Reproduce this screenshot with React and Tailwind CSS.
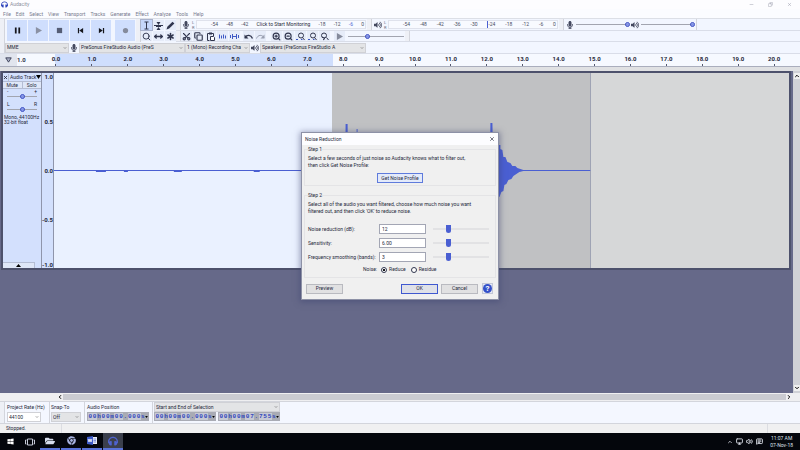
import { useState } from 'react';
import clsx from 'clsx';
import {
  ChevronDown,
  ChevronUp,
  ChevronLeft,
  ChevronRight,
  X,
  Minus,
  Copy,
  Scissors,
  ClipboardList,
  Undo2,
  Redo2,
  ZoomIn,
  ZoomOut,
  Search,
  MoveHorizontal,
  Asterisk,
  Monitor,
  Volume2,
  MessageSquareText,
} from 'lucide-react';
import { FaMicrophone, FaVolumeUp, FaWindows, FaChrome, FaFolderOpen, FaHeadphones } from 'react-icons/fa';

const MENUS = ['File', 'Edit', 'Select', 'View', 'Transport', 'Tracks', 'Generate', 'Effect', 'Analyze', 'Tools', 'Help'];

const DB_MARKS = ['-54', '-48', '-42', '-36', '-30', '-24', '-18', '-12', '-6', '0'];

const ROUND_THUMB =
  '[&::-webkit-slider-thumb]:appearance-none [&::-webkit-slider-thumb]:w-[3px] [&::-webkit-slider-thumb]:h-[3px] [&::-webkit-slider-thumb]:rounded-full [&::-webkit-slider-thumb]:bg-[#7f92e8] [&::-webkit-slider-thumb]:outline [&::-webkit-slider-thumb]:outline-[#3446c0]';

const BLOCK_THUMB =
  '[&::-webkit-slider-thumb]:appearance-none [&::-webkit-slider-thumb]:w-[5px] [&::-webkit-slider-thumb]:h-2 [&::-webkit-slider-thumb]:rounded-b-sm [&::-webkit-slider-thumb]:bg-[#4a5fd2]';

function Slider({ label, value, block = false, className }) {
  return (
    <input
      type="range"
      aria-label={label}
      defaultValue={value}
      className={clsx(
        'appearance-none min-w-0 bg-no-repeat bg-center',
        block
          ? 'bg-[linear-gradient(#e2e2e4,#e2e2e4)] bg-[length:100%_2px]'
          : 'bg-[linear-gradient(#a2a5b0,#a2a5b0)] bg-[length:100%_1px]',
        block ? BLOCK_THUMB : ROUND_THUMB,
        className
      )}
    />
  );
}

function Dropdown({ label, options, className, white = false }) {
  return (
    <div className={clsx('relative', className)}>
      <select
        aria-label={label}
        className={clsx(
          'block appearance-none w-full h-[10px] pl-px pr-2 border border-[#d0d1d6] text-[#26283a]',
          white ? 'bg-white' : 'bg-[#e3e4e6]'
        )}
      >
        {options.map((o) => (
          <option key={o}>{o}</option>
        ))}
      </select>
      <ChevronDown className="absolute right-[2px] top-[3px] w-1 h-1 text-[#555] pointer-events-none" strokeWidth={3} />
    </div>
  );
}

function Grip() {
  return <div className="w-[5px] self-stretch border-r border-[#d3d5dc] bg-[#eef0f6] flex-none" />;
}

// Transport glyphs
const TRANSPORT = [
  { name: 'Pause', color: '#15161c', d: 'M1 .5h2v7H1zM5 .5h2v7H5z' },
  { name: 'Play', color: '#8b91a3', d: 'M1 0l7 4-7 4z' },
  { name: 'Stop', color: '#555d75', d: 'M1 1h6v6H1z' },
  { name: 'Skip to Start', color: '#15161c', d: 'M1 1h1.4v6H1zM7 1v6L2.6 4z' },
  { name: 'Skip to End', color: '#15161c', d: 'M5.600 1H7v6H5.600zM1 1v6l4.400-3z' },
  { name: 'Record', color: '#858b9c', d: 'M4 1a3 3 0 1 1 0 6a3 3 0 1 1 0-6z' },
];

function TransportBar() {
  return (
    <div className="flex items-stretch py-px">
      {TRANSPORT.map((b, i) => (
        <button
          key={b.name}
          aria-label={b.name}
          className={clsx('w-5 mr-px bg-[#cfdefd] flex items-center justify-center', i === 5 && 'ml-[3px]')}
        >
          <svg viewBox="0 0 8 8" className="w-[7px] h-[7px]" fill={b.color}>
            <path d={b.d} />
          </svg>
        </button>
      ))}
    </div>
  );
}

function ToolsBar() {
  const icon = 'w-[9px] h-[9px]';
  const tools = [
    [
      'Selection Tool',
      <svg viewBox="0 0 9 9" className={icon} fill="none" stroke="currentColor">
        <path d="M2.500 1h4M2.500 8h4M4.500 1v7" />
      </svg>,
    ],
    [
      'Envelope Tool',
      <svg viewBox="0 0 9 9" className={icon} fill="none" stroke="currentColor">
        <path d="M0 4.500h9M2 5.500h5" />
        <path fill="currentColor" stroke="none" d="M2.500 1h4L4.500 4zM2.500 9h4l-2-3z" />
      </svg>,
    ],
    [
      'Draw Tool',
      <svg viewBox="0 0 9 9" className={icon} fill="currentColor">
        <path d="M.5 8.500l.8-2.700L6.500 .8l1.900 1.800-5.200 5z" />
      </svg>,
    ],
    ['Zoom Tool', <Search className={icon} strokeWidth={2.5} />],
    ['Time Shift Tool', <MoveHorizontal className={icon} strokeWidth={3.5} />],
    ['Multi-Tool', <Asterisk className={icon} strokeWidth={3} viewBox="3 3 18 18" />],
  ];
  return (
    <div className="grid grid-cols-3 gap-px py-px">
      {tools.map(([name, glyph], i) => (
        <button
          key={name}
          aria-label={name}
          className={clsx(
            'w-[11px] h-[10px] flex items-center justify-center text-[#31364e]',
            i === 0 ? 'bg-[#c5d6fb] outline outline-[#a9b2cc]' : 'bg-[#e6ecf9]'
          )}
        >
          {glyph}
        </button>
      ))}
    </div>
  );
}

function Channels() {
  return (
    <div className="text-[4px] leading-[5px] w-1 text-[#666a7c]">
      L<br />R
    </div>
  );
}

function Meter({ monitor = false, className }) {
  return (
    <div
      className={clsx(
        'flex justify-between items-center h-[9px] pl-[14px] pr-px bg-[#f8faff] border border-[#dfe2ec] text-[#4a4e62]',
        className
      )}
    >
      {monitor ? (
        <>
          {DB_MARKS.slice(0, 3).map((m) => (
            <span key={m}>{m}</span>
          ))}
          <button className="text-[#26283a] whitespace-nowrap">Click to Start Monitoring</button>
          {DB_MARKS.slice(6).map((m) => (
            <span key={m} className={clsx(m === '-6' && 'text-[#4a5fd2]')}>
              {m}
            </span>
          ))}
        </>
      ) : (
        DB_MARKS.map((m) => (
          <span key={m} className={clsx(m === '-24' && 'border-l border-[#4a5fd2]')}>
            {m}
          </span>
        ))
      )}
    </div>
  );
}

function EditBar() {
  const icon = 'w-[9px] h-[9px]';
  const btn = 'w-[11px] h-[10px] flex items-center justify-center bg-[#e6ecf9] text-[#31364e]';
  return (
    <div className="flex items-center gap-px">
      <button aria-label="Cut" className={btn}><Scissors className={clsx(icon, '-rotate-90')} strokeWidth={3} /></button>
      <button aria-label="Copy" className={btn}><Copy className={icon} strokeWidth={3} /></button>
      <button aria-label="Paste" className={btn}>
        <svg viewBox="0 0 9 9" className={icon} fill="none" stroke="currentColor">
          <path d="M3.500 8.500h-2v-7h6V4" />
          <path d="M3 1.500h3" strokeWidth="2" />
          <path d="M4.500 4.500h3l1 1v3h-4z" fill="#fff" />
        </svg>
      </button>
      <button aria-label="Trim" className={btn}>
        <svg viewBox="0 0 9 9" className={icon} fill="none" stroke="#3f58c4">
          <path d="M1.500 2.500v4M3.500 3.500v3M5.500 2.500v4M7.500 3.500v3" />
        </svg>
      </button>
      <button aria-label="Silence" className={btn}>
        <svg viewBox="0 0 9 9" className={icon} fill="none" stroke="#3f58c4">
          <path d="M.5 3v3M2.500 2v5M6.500 2v5M8.500 3v3M3 4.500h3" />
        </svg>
      </button>
      <button aria-label="Undo" className={clsx(btn, 'ml-[2px]')}>
        <svg viewBox="0 0 9 9" className={icon} fill="none" stroke="currentColor">
          <path d="M1 5.500C3 2.500 7 2.500 8.500 6.500" strokeWidth="1.300" />
          <path d="M.5 2.500v4h4z" fill="currentColor" stroke="none" />
        </svg>
      </button>
      <button aria-label="Redo" className={btn}>
        <svg viewBox="0 0 9 9" className={icon} fill="none" stroke="#9aa0b2">
          <path d="M8 5.500C6 2.500 2 2.500 .5 6.500" />
          <path d="M8.500 2.500v4h-4z" fill="#9aa0b2" stroke="none" />
        </svg>
      </button>
      <button aria-label="Zoom In" className={clsx(btn, 'ml-1')}><ZoomIn className={icon} strokeWidth={3} /></button>
      <button aria-label="Zoom Out" className={btn}><ZoomOut className={icon} strokeWidth={3} /></button>
      {['Fit Selection', 'Fit Project', 'Zoom Toggle'].map((n, i) => (
        <button key={n} aria-label={n} className={btn}>
          <svg viewBox="0 0 9 9" className={icon} fill="none" stroke="currentColor">
            <circle cx={i === 2 ? 4 : 5} cy="3.500" r="2.500" />
            <path d="M6.500 5.500L8.500 8" />
            {i === 2 ? <path d="M2 5l3 1.500L3 8" /> : <path d="M0 7.500h2M5 7.500h1.500" stroke="#3f58c4" />}
          </svg>
        </button>
      ))}
      <button aria-label="Play at Speed" className={clsx(btn, 'ml-[3px]')}>
        <svg viewBox="0 0 8 8" className="w-[7px] h-[7px]" fill="#858b9c">
          <path d="M1 0l7 4-7 4z" />
        </svg>
      </button>
      <Slider label="Playback speed" value={34} className="w-14 h-2 ml-[2px]" />
      <Grip />
    </div>
  );
}

function Toolbars() {
  return (
    <div className="bg-[#f2f6ff] border-t border-[#dcdfe6]">
      <div className="flex h-[23px]">
        <Grip />
        <div className="w-[2px]" />
        <TransportBar />
        <Grip />
        <ToolsBar />
        <div className="flex-1 min-w-0 flex flex-col">
          <div className="h-3 flex items-center border-b border-[#d9dde8]">
            <Grip />
            <FaMicrophone className="w-2 h-2 ml-px mr-[2px] text-[#44495f]" />
            <Channels />
            <Meter monitor className="w-[170px]" />
            <div className="w-px" />
            <Grip />
            <FaVolumeUp className="w-2 h-2 ml-[2px] mr-[2px] text-[#44495f]" />
            <Channels />
            <Meter className="w-[170px]" />
            <div className="w-px" />
            <Grip />
            <FaMicrophone className="w-2 h-2 mx-[2px] text-[#44495f]" />
            <Slider label="Recording volume" value={100} className="w-[53px] h-2" />
            <FaVolumeUp className="w-2 h-2 mx-[2px] text-[#44495f]" />
            <Slider label="Playback volume" value={100} className="w-[53px] h-2" />
            <div className="w-px self-stretch ml-[2px] bg-[#d3d5dc]" />
          </div>
          <div className="h-[11px] flex items-center border-b border-[#d9dde8]">
            <Grip />
            <EditBar />
          </div>
        </div>
      </div>
      <div className="h-[11px] flex items-center">
        <Grip />
        <Dropdown label="Audio host" options={['MME']} className="w-16" />
        <FaMicrophone className="w-2 h-2 mx-px text-[#44495f]" />
        <Dropdown label="Recording device" options={['PreSonus FireStudio Audio (PreS']} className="w-[106px]" />
        <Dropdown label="Recording channels" options={['1 (Mono) Recording Char']} className="w-[65px]" />
        <FaVolumeUp className="w-2 h-2 mx-px text-[#44495f]" />
        <Dropdown label="Playback device" options={['Speakers (PreSonus FireStudio A']} className="w-[106px]" />
      </div>
    </div>
  );
}

function Timeline() {
  const seconds = Array.from({ length: 21 }, (_, i) => i);
  return (
    <div className="relative h-[14px] flex bg-[#f6f9ff] border-y border-[#aaaebd] border-t-[#d9dde8] font-bold text-[#26283a]">
      <div className="absolute left-[55px] right-[467px] inset-y-0 bg-[#cfdefd]" />
      <div className="w-[17px] flex-none bg-[#e1e5ee] flex items-center justify-center">
        <svg viewBox="0 0 8 7" className="w-[7px] h-[6px]" fill="#aab0c4" stroke="#31364e">
          <path d="M.8 1h6.400L4 6z" />
        </svg>
      </div>
      <div className="w-[21px] flex-none pt-[2px] text-[6px] leading-[7px] text-[#31364e]">1.0</div>
      <div className="relative flex-1 flex mr-2">
        {seconds.map((s) => (
          <div key={s} className="flex-1 min-w-0 flex flex-col items-center justify-between">
            <span className="pt-px text-[6px] leading-[7px]">{s}.0</span>
            <span className="w-px h-[2px] bg-[#55596e]" />
          </div>
        ))}
      </div>
    </div>
  );
}

function TrackPanel() {
  return (
    <div className="w-[39px] flex-none flex flex-col bg-[#d3e0fd] border-r border-[#8f95ab] text-[#26283a]">
      <div className="h-[9px] flex items-center border-b border-[#b4bdd4]">
        <button aria-label="Close track" className="w-[7px] flex justify-center">
          <X className="w-[5px] h-[5px]" strokeWidth={4} />
        </button>
        <button className="flex-1 flex items-center justify-between border-l border-[#b4bdd4] pl-px whitespace-nowrap">
          Audio Track
          <svg viewBox="0 0 5 4" className="w-[5px] h-1"><path d="M0 0h5L2.500 4z" /></svg>
        </button>
      </div>
      <div className="h-[7px] flex border-b border-[#b4bdd4] bg-[#dfe7f8]">
        <button className="flex-1 border-r border-[#b4bdd4]">Mute</button>
        <button className="flex-1">Solo</button>
      </div>
      <div className="px-1 leading-[5px]">
        <div className="flex justify-between"><span>-</span><span>+</span></div>
        <Slider label="Gain" value={50} className="w-full block h-[5px]" />
        <div className="flex justify-between pt-[3px]"><span>L</span><span>R</span></div>
        <Slider label="Pan" value={50} className="w-full block h-[5px]" />
      </div>
      <div className="pt-[3px] pl-px leading-[5px] whitespace-nowrap">
        Mono, 44100Hz
        <br />
        32-bit float
      </div>
      <button aria-label="Collapse" className="mt-auto w-8 h-[6px] flex items-center justify-center bg-[#dfe7f8] border-t border-r border-[#b4bdd4]">
        <svg viewBox="0 0 5 3" className="w-[5px] h-[3px]"><path d="M0 3h5L2.500 0z" /></svg>
      </button>
    </div>
  );
}

function LevelScale() {
  return (
    <div className="w-3 flex-none flex flex-col bg-[#d3e0fd] border-r border-[#8f95ab] font-bold text-[6px] leading-[7px] text-right text-[#26283a]">
      <span className="flex-1">1.0</span>
      <span className="flex-[2] flex items-center justify-end">0.5</span>
      <span className="flex-[2] flex items-center justify-end">0.0</span>
      <span className="flex-[2] flex items-center justify-end">-0.5</span>
      <span className="flex-1 flex items-end justify-end">-1.0</span>
    </div>
  );
}

function Waveform() {
  return (
    <div className="relative flex-1 flex">
      <div className="flex-[279] bg-[#eaf1ff]" />
      <div className="flex-[258] bg-[#c0c1c3] border-r border-[#9fa3b4]" />
      <div className="flex-[199] bg-[#d6d7d8]" />
      <svg
        viewBox="0 0 736 195"
        preserveAspectRatio="none"
        className="absolute inset-0 w-full h-full"
        fill="#4a5fd2"
        stroke="none"
      >
        <path d="M0 97h537v1H0z" />
        <path d="M42 97h10v2H42zM70 97h4v2h-4zM120 97h8v2h-8zM200 97h6v2h-6z" />
        <path d="M292 51h2l1 94h-4zM303 56h1v80h-1zM437 50h2l2 90h-5z" />
        <path d="M438 60l6 12h3v4l2 1 1 7h2l2 5 3 1 2 3h3l2 2 3 1 3 1v1l-4 1-3 2-3 2-2 3-3 1-2 4-2 1-1 6-2 1-2 5h-1v-4l-4-1-4 10z" />
      </svg>
    </div>
  );
}

function NoiseReductionDialog() {
  const [mode, setMode] = useState('reduce');
  const fields = [
    { id: 'nr', label: 'Noise reduction (dB):', value: '12' },
    { id: 'sens', label: 'Sensitivity:', value: '6.00' },
    { id: 'freq', label: 'Frequency smoothing (bands):', value: '3' },
  ];
  const btn = 'h-[10px] w-[37px] border border-[#b9bac0] bg-[#e1e1e2]';
  return (
    <div
      role="dialog"
      aria-label="Noise Reduction"
      className="absolute left-1/2 top-[132px] -translate-x-1/2 w-[198px] bg-[#f0f0f0] border border-[#8d91a6] shadow-[0_1px_6px_1px_rgba(60,66,110,0.5)] text-[#26283a]"
    >
      <div className="h-3 px-[3px] bg-[#fdfdff] flex items-center justify-between">
        <span>Noise Reduction</span>
        <button aria-label="Close"><X className="w-[6px] h-[6px]" strokeWidth={2.5} /></button>
      </div>

      <div className="px-[2px] pt-px pb-[5px]">
        <fieldset className="border border-[#e4e4e6] px-[3px] h-10">
          <legend className="leading-[7px]">Step 1</legend>
          <p className="pt-[2px]">
            Select a few seconds of just noise so Audacity knows what to filter out,
            <br />
            then click Get Noise Profile:
          </p>
          <div className="flex justify-center pt-1">
            <button className="w-[46px] h-[10px] border border-[#5f7bdc] bg-[#e3eafa]">Get Noise Profile</button>
          </div>
        </fieldset>

        <fieldset className="mt-[6px] border border-[#e4e4e6] px-[3px] h-[86px]">
          <legend className="leading-[7px]">Step 2</legend>
          <p className="pt-[2px]">
            Select all of the audio you want filtered, choose how much noise you want
            <br />
            filtered out, and then click 'OK' to reduce noise.
          </p>
          <div className="pt-[9px] flex flex-col gap-1">
            {fields.map((f) => (
              <div key={f.id} className="flex items-center h-[10px]">
                <label htmlFor={f.id} className="w-[71px] whitespace-nowrap">{f.label}</label>
                <input
                  id={f.id}
                  type="text"
                  defaultValue={f.value}
                  className="w-[47px] h-[10px] px-[2px] bg-white border border-[#a3a6b4]"
                />
                <Slider label={f.label} value={25} block className="ml-[7px] w-14 h-2" />
              </div>
            ))}
          </div>
          <div className="flex items-center pt-1 pl-[55px]">
            <span className="mr-1">Noise:</span>
            {['reduce', 'residue'].map((m) => (
              <label key={m} className="flex items-center mr-[5px] gap-[2px] capitalize">
                <input
                  type="radio"
                  name="mode"
                  checked={mode === m}
                  onChange={() => setMode(m)}
                  className="appearance-none w-[6px] h-[6px] rounded-full border border-[#31364e] bg-white checked:bg-[radial-gradient(#15161c_40%,#fff_50%)]"
                />
                {m}
              </label>
            ))}
          </div>
        </fieldset>

        <div className="flex items-center pt-[5px] pl-[2px] pr-[3px]">
          <button className={btn}>Preview</button>
          <button className="ml-auto h-[10px] w-[37px] border border-[#3f58d0] bg-[#dfe1e8]">OK</button>
          <button className={clsx(btn, 'ml-[3px]')}>Cancel</button>
          <button aria-label="Help" className="ml-1 w-[11px] h-[11px] bg-[#e4e8f4] border border-[#c3c7d6] flex items-center justify-center">
            <span className="w-[9px] h-[9px] flex-none rounded-full bg-[#3450c8] text-white font-bold text-[8px] leading-[9px]">?</span>
          </button>
        </div>
      </div>
    </div>
  );
}

// Each character of the time readout sits in its own cell
function TimeField({ label, value }) {
  return (
    <div role="group" aria-label={label} className="h-[9px] w-[62px] flex items-center bg-[#a9abb4] p-px">
      {value.split('').map((c, i) => (
        <span
          key={i}
          className={clsx(
            "flex-1 min-w-0 h-[7px] leading-[7px] text-[6px] text-center font-['Liberation_Mono',monospace] font-bold text-[#2f45bd]",
            /\d/.test(c) && 'bg-[#c6c9d4]'
          )}
        >
          {c}
        </span>
      ))}
      <svg viewBox="0 0 4 3" className="w-[3px] h-[2px] flex-none"><path d="M0 0h4L2 3z" /></svg>
    </div>
  );
}

function SelectionBar() {
  return (
    <div className="h-[23px] flex bg-[#f4f7ff] border-y border-[#d3d5dc] text-[#26283a]">
      <Grip />
      <div className="pl-[2px] w-11 flex flex-col gap-px pt-px">
        <span className="leading-[8px] whitespace-nowrap">Project Rate (Hz)</span>
        <Dropdown white label="Project Rate (Hz)" options={['44100']} className="w-[34px]" />
      </div>
      <div className="pl-px w-[35px] flex flex-col gap-px pt-px border-l border-[#d3d5dc]">
        <span className="leading-[8px]">Snap-To</span>
        <Dropdown label="Snap-To" options={['Off']} className="w-[30px]" />
      </div>
      <div className="pl-[2px] w-[68px] flex flex-col gap-px pt-px border-l border-[#d3d5dc]">
        <span className="leading-[8px]">Audio Position</span>
        <TimeField label="Audio Position" value="00h00m00.000s" />
      </div>
      <div className="pl-px flex flex-col border-l border-[#d3d5dc]">
        <Dropdown label="Selection mode" options={['Start and End of Selection']} className="w-[126px]" />
        <div className="flex gap-[2px]">
          <TimeField label="Selection start" value="00h00m00.000s" />
          <TimeField label="Selection end" value="00h00m07.755s" />
        </div>
      </div>
    </div>
  );
}

function Taskbar() {
  const apps = [
    ['File Explorer', <FaFolderOpen className="w-[10px] h-[10px] text-[#d6dcec]" />],
    ['Chrome', <FaChrome className="w-[9px] h-[9px] text-[#a8b3e0]" />],
    [
      'Word',
      <svg viewBox="0 0 10 9" className="w-[10px] h-[9px]">
        <path fill="#e8ecf8" d="M4 1h6v7H4z" />
        <path fill="#3f5cc8" d="M0 1l6-1v9L0 8z" />
        <path fill="none" stroke="#fff" strokeWidth=".8" d="M1.200 3l.8 3 1-3 1 3 .8-3" />
        <path stroke="#3f5cc8" strokeWidth=".6" d="M6.500 3H9M6.500 4.500H9M6.500 6H9" />
      </svg>,
    ],
    ['Audacity', <FaHeadphones className="w-[10px] h-[10px] text-[#4f63cf]" />],
  ];
  return (
    <div className="h-[17px] flex items-stretch bg-[#04060c] text-[#dfe2ec]">
      <button aria-label="Start" className="w-5 flex items-center justify-center">
        <FaWindows className="w-[7px] h-[7px] text-white" />
      </button>
      <button aria-label="Task View" className="w-5 flex items-center justify-center">
        <svg viewBox="0 0 10 8" className="w-[10px] h-2" fill="none" stroke="#c4c8d6">
          <path d="M2.500 1h5v6h-5zM1.500 2H.5v4h1M8.500 2h1v4h-1" />
        </svg>
      </button>
      {apps.map(([name, glyph], i) => (
        <button
          key={name}
          aria-label={name}
          className={clsx(
            'w-5 mr-px flex items-center justify-center border-b-2 border-[#5a72d8]',
            i === 3 && 'bg-[#3b3f4c]'
          )}
        >
          {glyph}
        </button>
      ))}
      <div className="ml-auto flex items-center gap-[3px] pr-[7px]">
        <ChevronUp className="w-[6px] h-[6px]" strokeWidth={3} />
        <Monitor className="w-[7px] h-[7px]" strokeWidth={3} />
        <Volume2 className="w-[7px] h-[7px]" strokeWidth={3} />
        <MessageSquareText className="w-[7px] h-[7px]" strokeWidth={3} />
        <div className="text-center ml-1 leading-[7px] whitespace-nowrap">
          11:07 AM
          <br />
          07-Nov-18
        </div>
      </div>
    </div>
  );
}

export default function App() {
  return (
    <div className="relative min-h-screen flex flex-col overflow-hidden bg-[#666989] font-[Roboto,'Liberation_Sans',sans-serif] text-[5px] leading-[7px]">
      {/* Title bar */}
      <div className="h-[9px] flex items-center bg-[#fdfdff] text-[#8d90a0]">
        <FaHeadphones className="w-[7px] h-[7px] mx-px text-[#2f45bd]" />
        <span className="ml-px">Audacity</span>
        <div className="ml-auto flex gap-[14px] pr-2">
          <Minus className="w-[5px] h-[5px]" />
          <Copy className="w-[5px] h-[5px] -scale-x-100" />
          <X className="w-[5px] h-[5px]" />
        </div>
      </div>

      {/* Menu */}
      <nav className="h-[9px] flex items-end gap-[5px] pl-[3px] bg-[#fbfcff] text-[#777b8e]">
        {MENUS.map((m) => (
          <button key={m}>{m}</button>
        ))}
      </nav>

      <Toolbars />
      <Timeline />
      <div className="h-1 bg-[#e0e1e3] flex-none" />

      {/* Tracks */}
      <div className="flex-1 flex">
        <div className="flex-1 min-w-0 pl-px pr-[2px]">
          <div className="h-[199px] flex border-2 border-[#4d516c]">
            <TrackPanel />
            <LevelScale />
            <Waveform />
          </div>
        </div>
        <div className="w-[7px] flex flex-col justify-between items-center py-[2px] bg-[#d0d1d6]">
          <ChevronUp className="w-[6px] h-[6px] bg-[#f0f0f0]" strokeWidth={4} />
          <ChevronDown className="w-[6px] h-[6px] bg-[#f0f0f0]" strokeWidth={4} />
        </div>
      </div>
      <div className="h-2 flex items-center bg-[#efeff1] pl-[57px] pr-2">
        <ChevronLeft className="w-[6px] h-[6px]" strokeWidth={4} />
        <div className="flex-1 self-stretch my-px bg-[#cacbd1]" />
        <ChevronRight className="w-[6px] h-[6px]" strokeWidth={4} />
      </div>

      <SelectionBar />
      <div className="h-[9px] flex items-center bg-[#f0f0f1] pl-[6px] text-[#26283a]">
        <span className="w-[55px]">Stopped.</span>
        <div className="flex-1 self-stretch border-x border-[#dcdde2] mr-8" />
      </div>
      <Taskbar />

      <NoiseReductionDialog />
    </div>
  );
}
